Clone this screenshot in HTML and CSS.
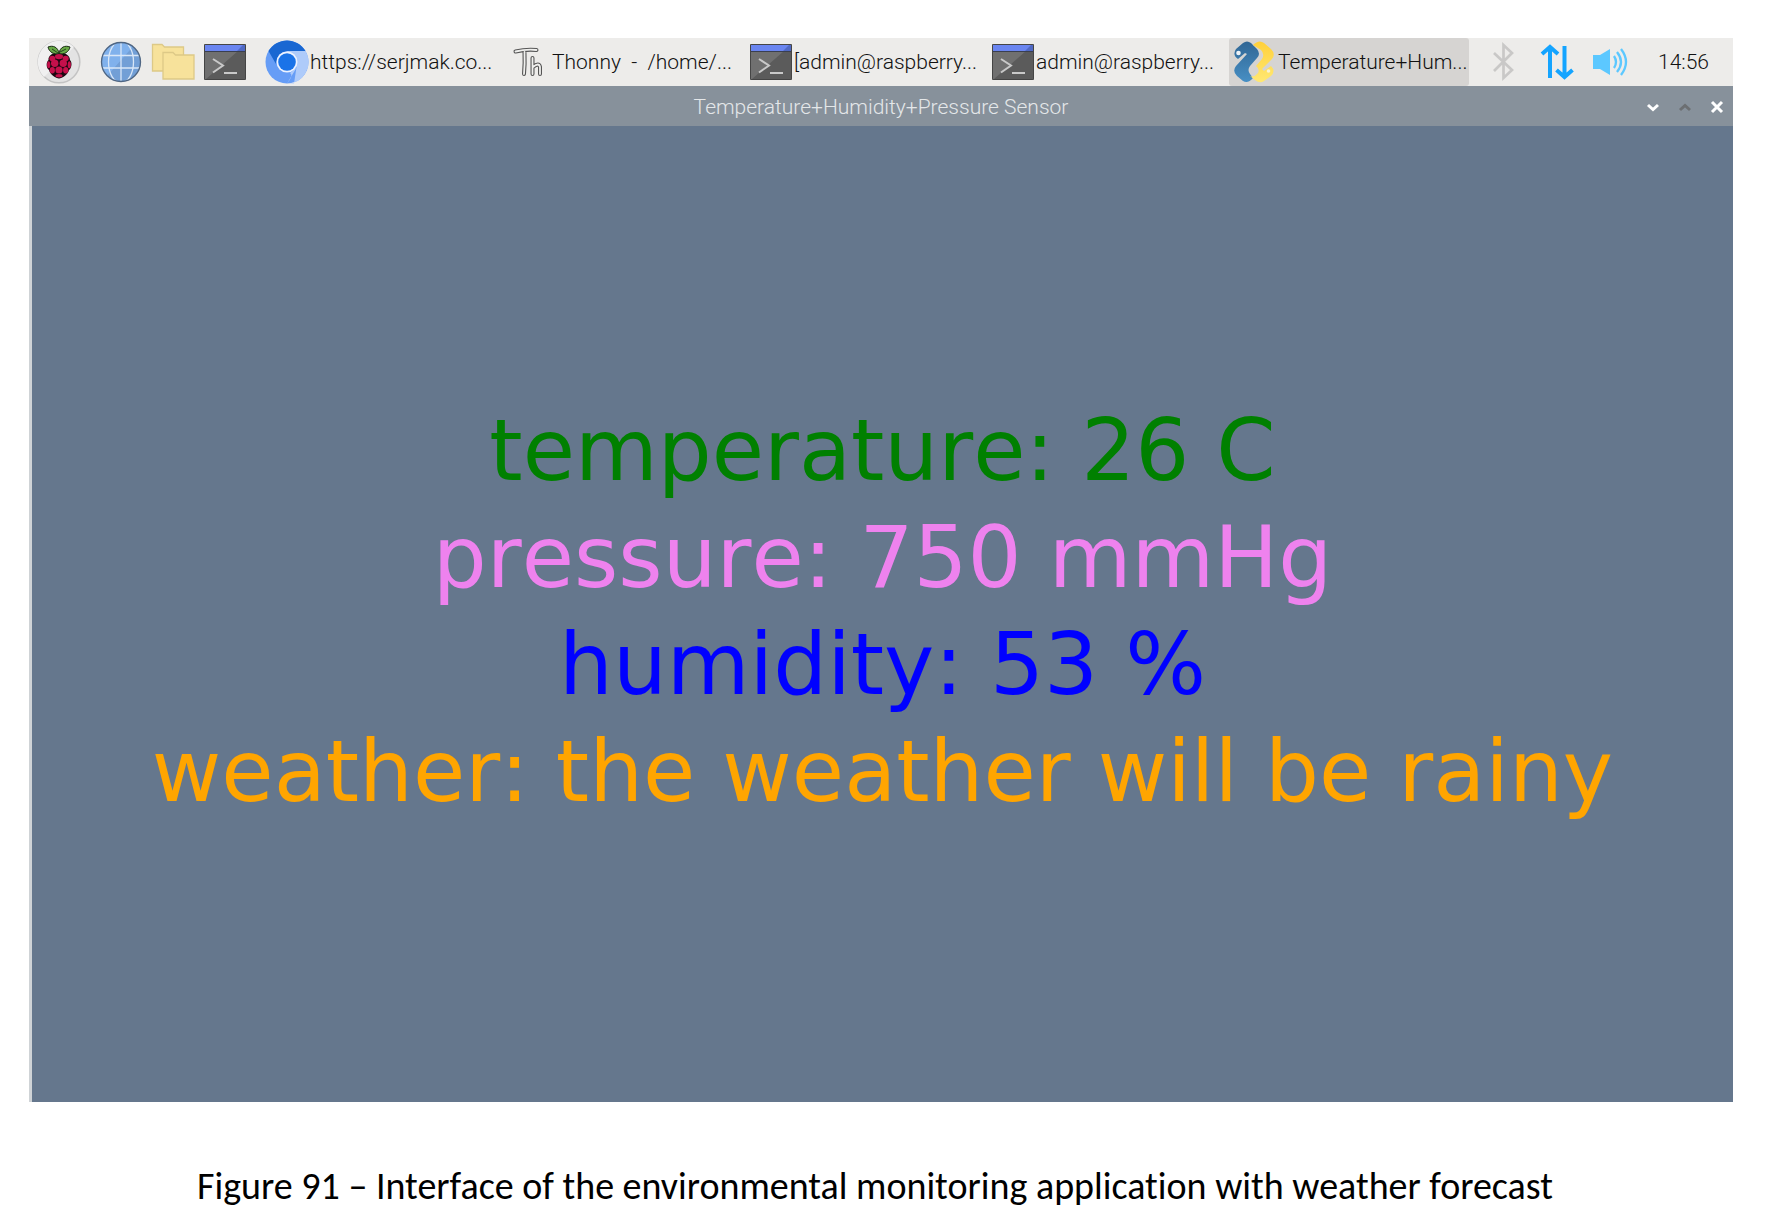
FILE: index.html
```html
<!DOCTYPE html>
<html lang="en">
<head>
<meta charset="utf-8">
<title>Temperature+Humidity+Pressure Sensor</title>
<link rel="stylesheet" href="styles.css">
</head>
<body>
<svg class="defs" aria-hidden="true">
  <defs>
    <linearGradient id="blueSnake" x1="0" y1="0" x2="0" y2="1"><stop offset="0" stop-color="#316694"/><stop offset="1" stop-color="#478fc4"/></linearGradient>
    <linearGradient id="yellowSnake" x1="0" y1="0" x2="0" y2="1"><stop offset="0" stop-color="#ffd03a"/><stop offset="1" stop-color="#ffe873"/></linearGradient>
    <clipPath id="globeClip"><circle cx="22" cy="22" r="19"/></clipPath>
    <symbol id="terminal" viewBox="0 0 44 44">
      <rect x="1" y="4" width="42" height="36" rx="1" fill="#5b5b5b"/>
      <path d="M2 11H35L3 39H2Z" fill="#707070"/>
      <path d="M2 5H42V11H2Z" fill="#5069c4"/>
      <path d="M2 5H40L34 11H2Z" fill="#6a85f0"/>
      <path d="M2 11.5H42" stroke="#3a3f50"/>
      <rect x="1.5" y="4.500" width="41" height="35" rx="1" fill="none" stroke="#454545"/>
      <path d="M10 19L20 25.500L10 32.500M21 33H34" fill="none" stroke="#c9c9c9" stroke-width="2"/>
    </symbol>
  </defs>
</svg>

<figure class="figure">
  <div class="screen">
    <header class="taskbar">
      <nav class="launchers" aria-label="Launchers">
        <button class="launcher menu" aria-label="Menu">
          <svg viewBox="0 0 44 44"><circle cx="22" cy="22" r="20.800" fill="#e3e3e3" stroke="#c3c3c3" stroke-width="1.500"/><path d="M7 37A21 21 0 0 1 37 7Z" fill="#f0f0f0"/>
            <path d="M22 13C28 12 33 16 33 20C36 23 34 29 32 30C31 35 25 38 22 38.500C19 38 13 35 12 30C9 28 9 22 11.500 20C11 16 16 12 22 13Z" fill="#1a0810"/>
            <g fill="#c4104b"><ellipse cx="22" cy="16.500" rx="4" ry="2.700"/><ellipse cx="15.300" cy="18.400" rx="3" ry="2.700"/><ellipse cx="28.700" cy="18.400" rx="3" ry="2.700"/><circle cx="17.700" cy="23.300" r="3.700"/><circle cx="26.300" cy="23.300" r="3.700"/><ellipse cx="11.700" cy="24.800" rx="1.600" ry="3.500"/><ellipse cx="32.300" cy="24.800" rx="1.600" ry="3.500"/><circle cx="22" cy="30" r="3.600"/><ellipse cx="15.300" cy="30.300" rx="2.600" ry="3.200"/><ellipse cx="28.700" cy="30.300" rx="2.600" ry="3.200"/><ellipse cx="22" cy="35.800" rx="3.500" ry="1.700"/></g>
            <path d="M22 13.500C17 15 12 12 11 7C16 5 21 7 22 13.500C23 7 28 5 33 7C32 12 27 15 22 13.500Z" fill="#67a846" stroke="#1b2d15"/><path d="M15 9L21 13L29 9" fill="none" stroke="#24451c"/></svg>
        </button>
        <button class="launcher" aria-label="Web browser">
          <svg viewBox="0 0 44 44"><circle cx="22" cy="22" r="19.500" fill="#729fd6"/><path d="M2.500 22A19.500 19.500 0 0 1 34 6.500L8 36Q3 31 2.500 22Z" fill="#80b1ec"/><g fill="none" stroke="#d9e7f7" stroke-width="1.300" clip-path="url(#globeClip)"><path d="M22 2V42M2 28H42M2 15.500H42"/><ellipse cx="22" cy="22" rx="12.500" ry="21"/></g><circle cx="22" cy="22" r="19.500" fill="none" stroke="#4f6683" stroke-width="1.300"/></svg>
        </button>
        <button class="launcher" aria-label="File manager">
          <svg viewBox="0 0 44 44"><g fill="#f7e29b" stroke="#ddc987" stroke-width="1.300"><path d="M1.500 31V4.500H11L13.500 7H32.500V31Z"/><path d="M12 39V12.500H22L24.500 15H43V39Z"/></g></svg>
        </button>
        <button class="launcher" aria-label="Terminal"><svg><use href="#terminal"/></svg></button>
      </nav>

      <nav class="tasks" aria-label="Windows">
        <button class="task">
          <svg viewBox="0 0 44 44"><circle cx="22" cy="22" r="21.500" fill="#669df6"/><path d="M22 11H40.500A21.500 21.500 0 0 1 22 43.500H29L31.500 27Z" fill="#aecbfa"/><path d="M22 43.500L32 27L25 33Q29 35 22 43.500Z" fill="#aecbfa"/><path d="M3.500 11A21.500 21.500 0 0 1 40.500 11H22Q12 12 11 24Z" fill="#1967d2"/><circle cx="22" cy="22" r="10.500" fill="#edf3ff"/><circle cx="22" cy="22" r="8.800" fill="#1a73e8"/></svg>
          <span>https://serjmak.co...</span>
        </button>
        <button class="task">
          <svg viewBox="0 0 44 44"><g fill="none" stroke-linecap="round" stroke-linejoin="round"><path d="M8.500 11.500Q19 9 29.500 10M17.500 12Q18 24 17 34M25.500 18V34M26 27Q32 22 33 27V34" stroke="#555" stroke-width="4"/><path d="M8.500 11.500Q19 9 29.500 10M17.500 12Q18 24 17 34M25.500 18V34M26 27Q32 22 33 27V34" stroke="#f0f0ee" stroke-width="1.800"/></g></svg>
          <span>Thonny&nbsp; -&nbsp; /home/...</span>
        </button>
        <button class="task"><svg><use href="#terminal"/></svg><span>[admin@raspberry...</span></button>
        <button class="task"><svg><use href="#terminal"/></svg><span>admin@raspberry...</span></button>
        <button class="task active">
          <svg viewBox="0 0 44 44"><path d="M3 9L10 3Q14 0 18 3L24 9Q28 14 24 18L17 26Q14 30 17 34L20 38Q15 44 10 41L4 36Q-1 31 3 26L14 14L12 13L5 19Q-1 15 3 9Z" fill="url(#blueSnake)"/><path d="M20 5Q26 -1 31 3L38 9Q43 14 39 19L29 29L31 31L38 26Q43 31 38 36L31 41Q27 44 22 40L17 36Q21 38 25 33Q27 29 23 26L29 19Q32 14 28 10Z" fill="url(#yellowSnake)"/><circle cx="5.500" cy="13" r="2.300" fill="#eef3f7"/><circle cx="35.500" cy="31" r="1.800" fill="#f8f3d4"/></svg>
          <span>Temperature+Hum...</span>
        </button>
      </nav>

      <div class="tray">
        <button class="status" aria-label="Bluetooth"><svg viewBox="0 0 44 44"><path d="M13 13L31 30L22.500 38V5L31 13L13 31" fill="none" stroke="#c9c8c7" stroke-width="2.700"/></svg></button>
        <button class="status" aria-label="Network"><svg viewBox="0 0 44 44"><path d="M15 38V8M7 14L15 7L23 14M29.500 6V36M21.500 30L29.500 37L37.500 30" fill="none" stroke="#14a4ff" stroke-width="4"/></svg></button>
        <button class="status" aria-label="Volume"><svg viewBox="0 0 44 44"><path d="M4 15H11L21 9V35L11 29H4Z" fill="#5cc8ff"/><path d="M25 16Q29 22 25 28M28 12Q36 22 28 32M32 9Q42 22 32 35" fill="none" stroke="#5cc8ff" stroke-width="2.300"/></svg></button>
        <time class="clock">14:56</time>
      </div>
    </header>

    <section class="window">
      <div class="titlebar">
        <h1 class="title">Temperature+Humidity+Pressure Sensor</h1>
        <div class="controls">
          <button class="control" aria-label="Minimize"><svg viewBox="0 0 16 16"><path d="M3 6L8 10.500L13 6"/></svg></button>
          <button class="control dim" aria-label="Maximize"><svg viewBox="0 0 16 16"><path d="M3 11L8 6.500L13 11"/></svg></button>
          <button class="control" aria-label="Close"><svg viewBox="0 0 16 16"><path d="M3 3L13 13M13 3L3 13"/></svg></button>
        </div>
      </div>
      <div class="readings">
        <p class="temperature">temperature: 26 C</p>
        <p class="pressure">pressure: 750 mmHg</p>
        <p class="humidity">humidity: 53 %</p>
        <p class="weather">weather: the weather will be rainy</p>
      </div>
    </section>
  </div>
  <figcaption class="caption">Figure 91 – Interface of the environmental monitoring application with weather forecast</figcaption>
</figure>
</body>
</html>
```
FILE: styles.css
```css
* { box-sizing: border-box; }

body {
  margin: 0;
  background: #fff;
  font-family: Roboto, sans-serif;
}

button {
  margin: 0;
  padding: 0;
  border: 0;
  background: none;
  font: inherit;
  color: inherit;
}

.defs { position: absolute; width: 0; height: 0; }

.figure { margin: 0; padding: 38px 32px 0 29px; }

.taskbar {
  display: flex;
  align-items: stretch;
  height: 48px;
  background: #edecea;
  color: #111;
  font-size: 21px;
  font-weight: 300;
  line-height: 48px;
  white-space: nowrap;
}

.taskbar svg { display: block; flex: none; width: 44px; height: 44px; }

.launchers { display: flex; align-items: center; gap: 8px; padding-left: 8px; }
.menu { margin-right: 10px; }

.tasks { display: flex; gap: 2px; margin-left: 14px; }
.task {
  display: flex;
  align-items: center;
  gap: 1px;
  width: 240px;
  padding-left: 4px;
  border-radius: 3px;
  text-align: left;
}
.active { background: #d6d4d2; }

.tray { display: flex; align-items: center; margin-left: auto; padding-right: 24px; }
.status { display: flex; justify-content: center; width: 54px; }
.clock { margin-left: 20px; }

.titlebar {
  display: grid;
  grid-template-columns: 1fr auto 1fr;
  align-items: center;
  height: 40px;
  padding-top: 2px;
  background: #87919b;
}
.title {
  grid-column: 2;
  margin: 0;
  color: #e4e7e9;
  font-size: 21px;
  font-weight: 300;
  line-height: 38px;
}
.controls { display: flex; justify-content: flex-end; gap: 16px; padding-right: 8px; }
.control { color: #fff; }
.control svg {
  display: block;
  width: 16px;
  height: 16px;
  fill: none;
  stroke: currentColor;
  stroke-width: 3;
}
.dim { color: #6c6f72; }

.readings {
  display: flex;
  flex-direction: column;
  justify-content: center;
  aspect-ratio: 1704 / 976;
  padding-bottom: 6px;
  border-left: 3px solid #cfd3d6;
  background: #65778d;
  font-family: "DejaVu Sans", sans-serif;
  font-size: 85px;
  font-kerning: none;
  line-height: 107px;
  text-align: center;
}
.readings p { margin: 0; }
.temperature { color: #008000; }
.pressure { color: #ee82ee; }
.humidity { color: #0000ff; }
.weather { color: #ffa500; }

.caption {
  padding: 60px 12px 20px 0;
  color: #000;
  font-family: Carlito, Lato, sans-serif;
  font-size: 38px;
  font-variant-ligatures: none;
  line-height: 48px;
  text-align: center;
}
```
